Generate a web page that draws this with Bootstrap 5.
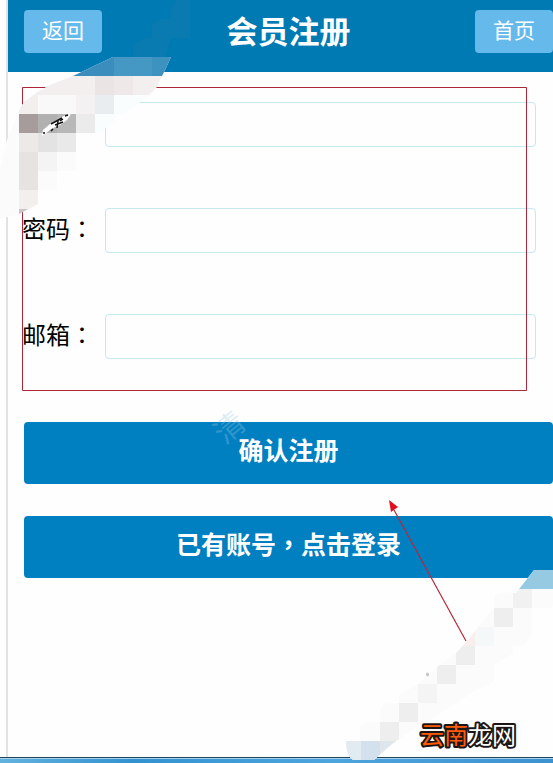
<!DOCTYPE html>
<html lang="zh-CN">
<head>
<meta charset="utf-8">
<meta name="viewport" content="width=device-width, initial-scale=1">
<title>会员注册</title>
<link href="https://cdn.jsdelivr.net/npm/bootstrap@5.3.0/dist/css/bootstrap.min.css" rel="stylesheet">
<style>
body { font-family: "Liberation Sans", "Noto Sans CJK SC", sans-serif; background: #fefefe; color: #000; overflow-x: hidden; }
.page-frame { border-left: 2px solid #e2e2e2; margin-left: 6px; }
.top-bar { background: #007ab3; height: 72px; padding: 10px 0 0 16px; }
.top-bar h1 { font-size: 31px; line-height: 46px; }
.btn-top { --bs-btn-color: #fff; --bs-btn-bg: #66b9eb; --bs-btn-hover-color: #fff; --bs-btn-hover-bg: #57ade2; --bs-btn-border-width: 0; --bs-btn-border-radius: 4px; width: 78px; height: 43px; padding: 0 0 2px; font-size: 21px; line-height: 41px; }
.form-rows { padding: 30px 17px 0 14px; gap: 61px; }
.form-rows label { width: 83px; height: 45px; font-size: 24px; line-height: 43px; white-space: nowrap; }
.form-rows .form-control { height: 45px; border-color: #c5eaec; border-radius: 4px; background: #fefefe; }
.centered-mark { font-family: "Noto Sans CJK TC", sans-serif; line-height: 1; }
.actions { padding: 63px 0 0 16px; gap: 32px; }
.btn-main { --bs-btn-color: #fff; --bs-btn-bg: #0080c1; --bs-btn-hover-color: #fff; --bs-btn-hover-bg: #0073ae; --bs-btn-border-width: 0; --bs-btn-border-radius: 4px; height: 62px; padding: 0 0 4px; font-size: 25px; line-height: 58px; }
.task-strip { height: 6px; border-top: 1px solid #24455e; background: linear-gradient(90deg, #63b2de, #3292d0 24%, #4da5dd 60%, #3c91cf); box-shadow: inset 0 1px #a5d3ee; }
.overlay { left: 0; top: 0; pointer-events: none; }
</style>
<script src="https://cdn.jsdelivr.net/npm/bootstrap@5.3.0/dist/js/bootstrap.bundle.min.js"></script>
</head>
<body>
<div class="position-relative d-flex flex-column min-vh-100">
  <div class="page-frame flex-grow-1">
    <header class="top-bar d-flex align-items-start justify-content-between">
      <button type="button" class="btn btn-top">返回</button>
      <h1 class="fw-bold text-white m-0">会员注册</h1>
      <button type="button" class="btn btn-top">首页</button>
    </header>
    <main>
      <form>
        <div class="form-rows d-flex flex-column">
          <div class="d-flex">
            <label for="account" class="flex-shrink-0"></label>
            <input id="account" type="text" class="form-control" aria-label="账号">
          </div>
          <div class="d-flex">
            <label for="password" class="flex-shrink-0">密码<span class="centered-mark" lang="zh-TW">：</span></label>
            <input id="password" type="password" class="form-control">
          </div>
          <div class="d-flex">
            <label for="email" class="flex-shrink-0">邮箱<span class="centered-mark" lang="zh-TW">：</span></label>
            <input id="email" type="email" class="form-control">
          </div>
        </div>
        <div class="actions d-flex flex-column">
          <button type="button" class="btn btn-main fw-bold">确认注册</button>
          <button type="button" class="btn btn-main fw-bold">已有账号<span class="centered-mark" lang="zh-TW">，</span>点击登录</button>
        </div>
      </form>
    </main>
  </div>
  <footer class="task-strip"></footer>

  <svg class="overlay position-absolute" width="553" height="763" viewBox="0 0 553 763" aria-hidden="true">
    <defs>
      <clipPath id="smudgeTop"><path d="M113 57H171L165 70L162 76L156 88L148 96L140 102L122 116L105 128L98 140L98 160L80 175L60 190L38 204L19 214L0 219V170L6 143L18 112L24 102L36 93L50 85L73 76Z"/></clipPath>
      <clipPath id="smudgeLow"><path d="M534 570H553V606L520 650L494 664V682L476 690L455 704L430 720L412 730L392 744L374 760H353Q346 756 346 741H360V729Q361 723 369 722H380V709Q382 703 390 703H399V695L418 684L437 667L457 652L467 641L476 630L484 619L494 608V596Q496 591 516 593Z"/></clipPath>
    </defs>
    <path d="M22.500 87.500H526.500V390.500H22.500Z" fill="none" stroke="#ad2638"/>
    <g fill="#097bb1"><path d="M176 0h14v38h-19V10zM152 24l10-5h9v19h-19zM133 44l12-6h26l-6 19h-32z"/></g>
    <g clip-path="url(#smudgeTop)" shape-rendering="crispEdges">
      <path fill="#fbfbfb" d="M0 57h19v170H0z"/><path fill="#fefefe" d="M19 57h160v170H19z"/>
      <path fill="#3b8dbe" d="M57 57h57v19H57z"/><path fill="#4598c3" d="M114 57h38v19h-38z"/><path fill="#3e92bf" d="M152 57h19v19h-19z"/>
      <path fill="#f4efef" d="M19 76h152v19H19zM19 95h19v19H19zM19 190h19v19H19z"/>
      <path fill="#eae4e4" d="M95 76h19v19H95z"/><path fill="#eee8e9" d="M114 76h19v19h-19z"/>
      <path fill="#f9f9f9" d="M38 95h38v19H38z"/><path fill="#f4f1f2" d="M76 95h19v19H76z"/><path fill="#e9edef" d="M95 95h19v19H95z"/><path fill="#fafdfd" d="M114 95h50v19h-50zM95 114h19v19H95z"/>
      <path fill="#a69c9b" d="M19 114h19v19H19z"/><path fill="#b1b1b1" d="M38 114h19v19H38z"/><path fill="#b8b8b8" d="M57 114h19v19H57z"/><path fill="#ebebec" d="M76 114h19v19H76z"/>
      <path fill="#eee9e9" d="M19 133h19v19H19z"/><path fill="#e3e3e3" d="M38 133h19v19H38z"/><path fill="#e9e9e9" d="M57 133h19v19H57z"/>
      <path fill="#e8e3e3" d="M19 152h19v38H19z"/><path fill="#f4f4f4" d="M38 152h19v19H38z"/><path fill="#fbfbfb" d="M57 152h19v19H57zM38 171h19v19H38z"/><path fill="#c9c5c5" d="M19 209h19v9H19z"/>
    </g>
    <path fill="#fff" d="M42 136L43 130L50 124L61 118L65 115L71 114L67 120L60 125L51 129L45 134Z"/>
    <path d="M51 124L62 118M55 125L63 122M58 121L57 128M60 121L63 119M43 133h2M65 116l3-1M53 129l-2 2" fill="none" stroke="#111" stroke-width="1.500"/>
    <g clip-path="url(#smudgeLow)" shape-rendering="crispEdges">
      <path fill="#fbfbfb" d="M342 570h211v193H342z"/><path fill="#96c9e2" d="M513 570h40v19h-40z"/>
      <path fill="#f1f1f2" d="M513 589h19v19h-19z"/><path fill="#fefefe" d="M532 608h21v60h-40v-22h19z"/>
      <path fill="#eeeeef" d="M494 608h19v19h-19zM456 646h19v19h-19zM437 665h19v19h-19zM399 703h19v19h-19zM380 722h19v19h-19z"/>
      <path fill="#f4f8f9" d="M475 627h19v19h-19z"/><path fill="#f9eeee" d="M456 627h19v19h-19z"/><path fill="#f4f4f4" d="M418 684h19v19h-19z"/>
      <path fill="#e2eaf2" d="M342 741h19v22h-19z"/><path fill="#d4e0eb" d="M361 741h19v22h-19z"/><path fill="#dee5ec" d="M380 741h19v22h-19z"/>
    </g>
    <path d="M466 641L394 510" stroke="#ba2638" stroke-width="1.200"/>
    <path d="M389 500L398 507L391 512Z" fill="#df111d"/>
    <ellipse cx="427.500" cy="674.500" rx="1.500" ry="2" fill="#c6c6c6"/>
    <g font-family="Noto Sans CJK SC, sans-serif">
      <g transform="rotate(-40 230 428)"><text x="215" y="438" font-size="30" fill="#9ac8e4" fill-opacity=".32">清</text></g>
      <text x="420" y="744" font-size="24" fill="#fff" stroke="#1c1716" stroke-width="4" stroke-linejoin="round" paint-order="stroke"><tspan fill="#ff5a08">云南</tspan>龙网</text>
    </g>
  </svg>
</div>
</body>
</html>
